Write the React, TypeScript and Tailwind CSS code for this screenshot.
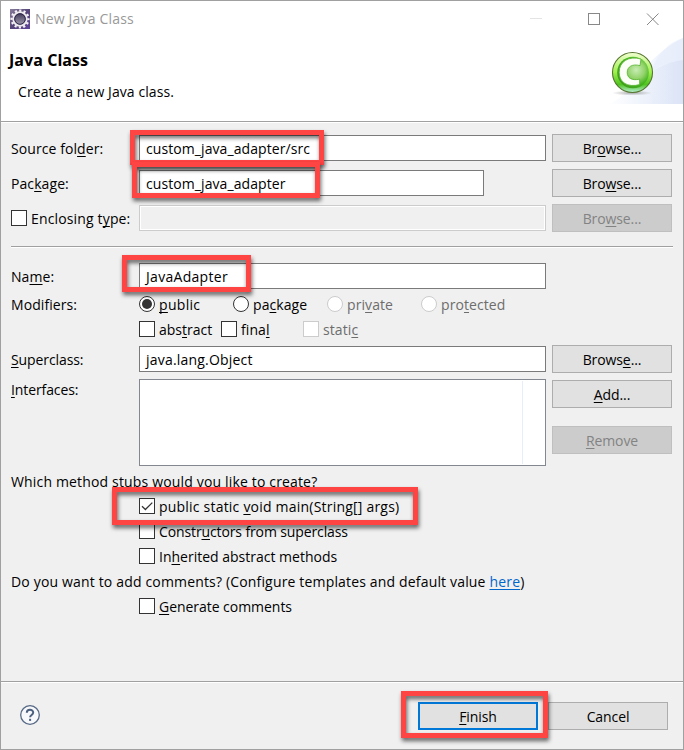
import type { ReactNode } from "react";

function U({ children }: { children: ReactNode }) {
  return (
    <span className="underline decoration-1 underline-offset-2 [text-decoration-skip-ink:none]">
      {children}
    </span>
  );
}

function Button({ children, disabled = false, primary = false }: { children: ReactNode; disabled?: boolean; primary?: boolean }) {
  const tone = disabled
    ? "border border-[#bfbfbf] bg-[#cccccc] text-[#838383]"
    : primary
      ? "border-2 border-[#0078d7] bg-[#e1e1e1]"
      : "border border-[#adadad] bg-[#e1e1e1]";
  return (
    <button disabled={disabled} className={`flex h-7 w-[120px] shrink-0 items-center justify-center pt-0.5 tracking-[-0.1px] ${tone}`}>
      <span>{children}</span>
    </button>
  );
}

function Field({ children, width = "w-[407px]" }: { children?: ReactNode; width?: string }) {
  return (
    <div className={`flex h-[26px] ${width} shrink-0 items-center border border-[#7a7a7a] bg-white pt-0.5 pl-1.5`}>
      <span>{children}</span>
    </div>
  );
}

function Box({ checked = false, disabled = false }: { checked?: boolean; disabled?: boolean }) {
  return (
    <span className={`flex size-4 shrink-0 border bg-white ${disabled ? "border-[#cccccc]" : "border-[#333333]"}`}>
      {checked && (
        <svg viewBox="0 0 14 14" className="size-3.5" fill="none" stroke="#333" strokeWidth="1.3">
          <path d="M2 7.2 5.4 10.5 12.3 3.6" />
        </svg>
      )}
    </span>
  );
}

function Radio({ selected = false, disabled = false }: { selected?: boolean; disabled?: boolean }) {
  return (
    <span className={`flex size-4 shrink-0 items-center justify-center rounded-full border bg-white ${disabled ? "border-[#cccccc]" : "border-[#333333]"}`}>
      {selected && <span className="size-2.5 rounded-full bg-[#333333]" />}
    </span>
  );
}

function Option({ control, children, className = "" }: { control: ReactNode; children: ReactNode; className?: string }) {
  return (
    <label className={`flex h-4 shrink-0 items-center gap-1 ${className}`}>
      {control}
      <span className="pt-0.5">{children}</span>
    </label>
  );
}

function Label({ children, className = "pt-0.5" }: { children: ReactNode; className?: string }) {
  return <div className={`w-32 shrink-0 ${className}`}>{children}</div>;
}

function Mark({ className }: { className: string }) {
  return (
    <div className={`pointer-events-none absolute border-5 border-[#ff4444] drop-shadow-[1px_3px_2px_rgba(0,0,0,0.6)] ${className}`} />
  );
}

function EclipseGear() {
  return (
    <svg viewBox="0 0 20 20" className="size-5">
      <defs>
        <linearGradient id="gearBg" x1="0" y1="0" x2="1" y2="1">
          <stop offset="0" stopColor="#8a7f9c" />
          <stop offset="0.5" stopColor="#554478" />
          <stop offset="1" stopColor="#60459a" />
        </linearGradient>
        <linearGradient id="gearCore" x1="0" y1="0" x2="0" y2="1">
          <stop offset="0" stopColor="#39324f" />
          <stop offset="1" stopColor="#a7a1b5" />
        </linearGradient>
      </defs>
      <rect width="20" height="20" fill="url(#gearBg)" />
      <circle cx="10" cy="10" r="8.4" fill="none" stroke="#f3f1f4" strokeWidth="2.4" strokeDasharray="2.2 2.198" strokeDashoffset="1.1" />
      <circle cx="10" cy="10" r="6.7" fill="url(#gearCore)" stroke="#eeebef" strokeWidth="2" />
      <circle cx="10" cy="10" r="5.3" fill="none" stroke="#2b2248" strokeWidth="1" />
    </svg>
  );
}

function Banner() {
  return (
    <svg viewBox="0 0 75 66" className="h-[66px] w-[75px]">
      <defs>
        <linearGradient id="waveA" x1="0" x2="1">
          <stop offset="0" stopColor="#ffffff" />
          <stop offset="0.55" stopColor="#f4f7fd" />
          <stop offset="1" stopColor="#e4ebf9" />
        </linearGradient>
        <linearGradient id="waveB" x1="0" x2="1">
          <stop offset="0" stopColor="#ffffff" />
          <stop offset="0.5" stopColor="#edf2fb" />
          <stop offset="1" stopColor="#dbe3f6" />
        </linearGradient>
        <radialGradient id="ball" cx="0.6" cy="0.42" r="0.62">
          <stop offset="0" stopColor="#c8edb4" />
          <stop offset="0.45" stopColor="#91d269" />
          <stop offset="0.75" stopColor="#44b51f" />
          <stop offset="1" stopColor="#3f9d1c" />
        </radialGradient>
        <linearGradient id="gloss" x1="0" y1="0" x2="0" y2="1">
          <stop offset="0" stopColor="#f2ffd2" />
          <stop offset="0.5" stopColor="#9cf04a" />
          <stop offset="0.8" stopColor="#4fc31f" />
          <stop offset="1" stopColor="#b9f0d9" />
        </linearGradient>
        <radialGradient id="ground">
          <stop offset="0" stopColor="#777" stopOpacity="0.6" />
          <stop offset="1" stopColor="#777" stopOpacity="0" />
        </radialGradient>
      </defs>
      <path d="M0 66C20 62 33 20 75 0V66Z" fill="url(#waveA)" />
      <path d="M44 30C50 17 60 4 75 0V22C60 24 50 28 44 34Z" fill="#e8eefb" opacity="0.6" />
      <path d="M0 66C22 60 35 27 75 22V66Z" fill="url(#waveB)" />
      <ellipse cx="24" cy="55" rx="20" ry="2.6" fill="url(#ground)" />
      <circle cx="24.5" cy="34.5" r="20" fill="url(#gloss)" stroke="#56752f" strokeWidth="1.1" />
      <circle cx="25" cy="34.5" r="15.8" fill="url(#ball)" />
      <path d="M33 21L32 27.6C24.5 25.6 19.2 28.6 19.2 34.4C19.2 40.2 24 42.8 31.6 41.2V46.6C19.5 49.8 11.2 44.3 11.2 34.4C11.2 23.6 20.5 17.6 33 21Z" fill="#fbfff7" stroke="#55b32f" strokeWidth="0.8" />
    </svg>
  );
}

export default function App() {
  return (
    <div className="relative flex h-[750px] w-[684px] flex-col overflow-hidden border border-[#a0a0a0] bg-[#f0f0f0] font-['Open_Sans','Noto_Sans',sans-serif] text-[14px] leading-5 tracking-[0.08px] whitespace-nowrap text-black">
      <header className="flex h-[120px] justify-between bg-white">
        <div className="pt-2 pl-[9px]">
          <div className="flex h-5 items-center gap-[5px] text-[#999999]">
            <EclipseGear />
            <span className="tracking-[0.18px]">New Java Class</span>
          </div>
          <h1 className="mt-[21px] -ml-px text-[16px] leading-5 font-bold tracking-[0.05px]">Java Class</h1>
          <p className="mt-3 pl-2 tracking-[0.08px]">Create a new Java class.</p>
        </div>
        <div className="flex w-[154px] flex-col">
          <svg viewBox="0 0 154 36" className="h-9 w-[154px]" fill="none" shapeRendering="crispEdges">
            <path d="M1 17.5H13" stroke="#e4e4e4" />
            <path d="M59.5 12.5H70.5V23.5H59.5Z" stroke="#888" />
            <path d="M118 12.5 129.5 24M129.5 12.5 118 24" stroke="#888" shapeRendering="auto" />
          </svg>
          <div className="mt-px flex justify-end">
            <Banner />
          </div>
        </div>
      </header>

      <main className="flex h-[560px] shrink-0 flex-col border-t border-[#a0a0a0] pl-[10px]">
        <div className="-ml-[10px] h-px shrink-0 bg-white" />
        <div className="mt-[11px] flex h-7 shrink-0 items-center">
          <Label>Source fol<U>d</U>er:</Label>
          <Field>custom_java_adapter/src</Field>
          <div className="ml-1.5"><Button>Br<U>o</U>wse...</Button></div>
        </div>
        <div className="mt-[7px] flex h-7 shrink-0 items-center">
          <Label>Pac<U>k</U>age:</Label>
          <Field width="w-[345px]">custom_java_adapter</Field>
          <div className="ml-[68px]"><Button>Bro<U>w</U>se...</Button></div>
        </div>
        <div className="mt-[7px] flex h-7 shrink-0 items-center">
          <Option control={<Box />} className="w-32 tracking-[0.15px]">Enclosing t<U>y</U>pe:</Option>
          <div className="h-[26px] w-[407px] border border-[#cccccc] bg-[#f0f0f0] shadow-[inset_0_0_0_1px_white]" />
          <div className="ml-1.5"><Button disabled>Bro<U>w</U>se...</Button></div>
        </div>
        <div className="mt-3.5 h-0.5 w-[662px] shrink-0 border-t border-[#a0a0a0] bg-white" />
        <div className="mt-[15px] flex h-[26px] shrink-0 items-center">
          <Label>Na<U>m</U>e:</Label>
          <Field><span className="tracking-[0.3px]">JavaAdapter</span></Field>
        </div>
        <div className="mt-[7px] flex h-4 shrink-0 items-center">
          <Label>Modifiers:</Label>
          <Option control={<Radio selected />} className="w-[94px] tracking-[0.3px]"><U>p</U>ublic</Option>
          <Option control={<Radio />} className="w-[94px]">pa<U>c</U>kage</Option>
          <Option control={<Radio disabled />} className="w-[94px] text-[#6d6d6d]">pri<U>v</U>ate</Option>
          <Option control={<Radio disabled />} className="text-[#6d6d6d]">pro<U>t</U>ected</Option>
        </div>
        <div className="mt-[9px] flex h-4 shrink-0 items-center pl-32">
          <Option control={<Box />} className="w-[82px] tracking-normal">abs<U>t</U>ract</Option>
          <Option control={<Box />} className="w-[82px]">fina<U>l</U></Option>
          <Option control={<Box disabled />} className="text-[#6d6d6d]">stati<U>c</U></Option>
        </div>
        <div className="mt-2 flex h-7 shrink-0 items-center">
          <Label className="pt-0.5 tracking-[-0.1px]"><U>S</U>uperclass:</Label>
          <Field><span className="tracking-[0.2px]">java.lang.Object</span></Field>
          <div className="ml-1.5"><Button>Brows<U>e</U>...</Button></div>
        </div>
        <div className="mt-1.5 flex h-[87px] shrink-0 items-start">
          <Label className="pt-px tracking-[-0.1px]"><U>I</U>nterfaces:</Label>
          <div className="flex h-[87px] w-[407px] justify-end border border-[#828790] bg-white py-px pr-[22px]">
            <div className="w-px bg-[#e5eefa]" />
          </div>
          <div className="mt-px ml-1.5 flex flex-col gap-[18px]">
            <Button><U>A</U>dd...</Button>
            <Button disabled><U>R</U>emove</Button>
          </div>
        </div>
        <p className="mt-1.5 h-5 shrink-0 tracking-[0.16px]">Which method stubs would you like to create?</p>
        <div className="mt-1.5 flex shrink-0 flex-col gap-[9px] pl-32">
          <Option control={<Box checked />} className="tracking-[0.21px]">public static <U>v</U>oid main(String[] args)</Option>
          <Option control={<Box />} className="tracking-[-0.12px]">Constr<U>u</U>ctors from superclass</Option>
          <Option control={<Box />} className="tracking-normal">In<U>h</U>erited abstract methods</Option>
        </div>
        <p className="mt-2 h-5 shrink-0 tracking-[0.165px]">
          Do you want to add comments? (Configure templates and default value{" "}
          <a className="text-[#0066cc] underline decoration-1 underline-offset-2">here</a>)
        </p>
        <div className="mt-1.5 flex pl-32">
          <Option control={<Box />} className="tracking-[-0.04px]"><U>G</U>enerate comments</Option>
        </div>
      </main>

      <footer className="flex flex-1 items-start justify-between border-t border-[#a0a0a0] pr-[15px] pl-[18px] shadow-[inset_0_1px_0_white]">
        <svg viewBox="0 0 22 22" className="mt-[22px] size-[22px]" fill="none">
          <circle cx="11" cy="11" r="9.3" fill="#f7f8fa" stroke="#566985" strokeWidth="1.3" />
          <path d="M7.8 8.7C7.8 4.9 14.2 4.9 14.2 8.6C14.2 11 11.1 11 11.1 13.3" stroke="#4b5f7f" strokeWidth="2" />
          <path d="M11.1 14.8V16.9" stroke="#4b5f7f" strokeWidth="2" />
        </svg>
        <div className="mt-5 flex gap-2.5">
          <Button primary><U>F</U>inish</Button>
          <Button>Cancel</Button>
        </div>
      </footer>

      <Mark className="top-[129px] left-[129px] h-[35px] w-[194px]" />
      <Mark className="top-[161px] left-[131px] h-9 w-[188px]" />
      <Mark className="top-[254px] left-[121px] h-[37px] w-[129px]" />
      <Mark className="top-[486px] left-[111px] h-[38px] w-[306px]" />
      <Mark className="top-[690px] left-[400px] h-[47px] w-[147px]" />
    </div>
  );
}
